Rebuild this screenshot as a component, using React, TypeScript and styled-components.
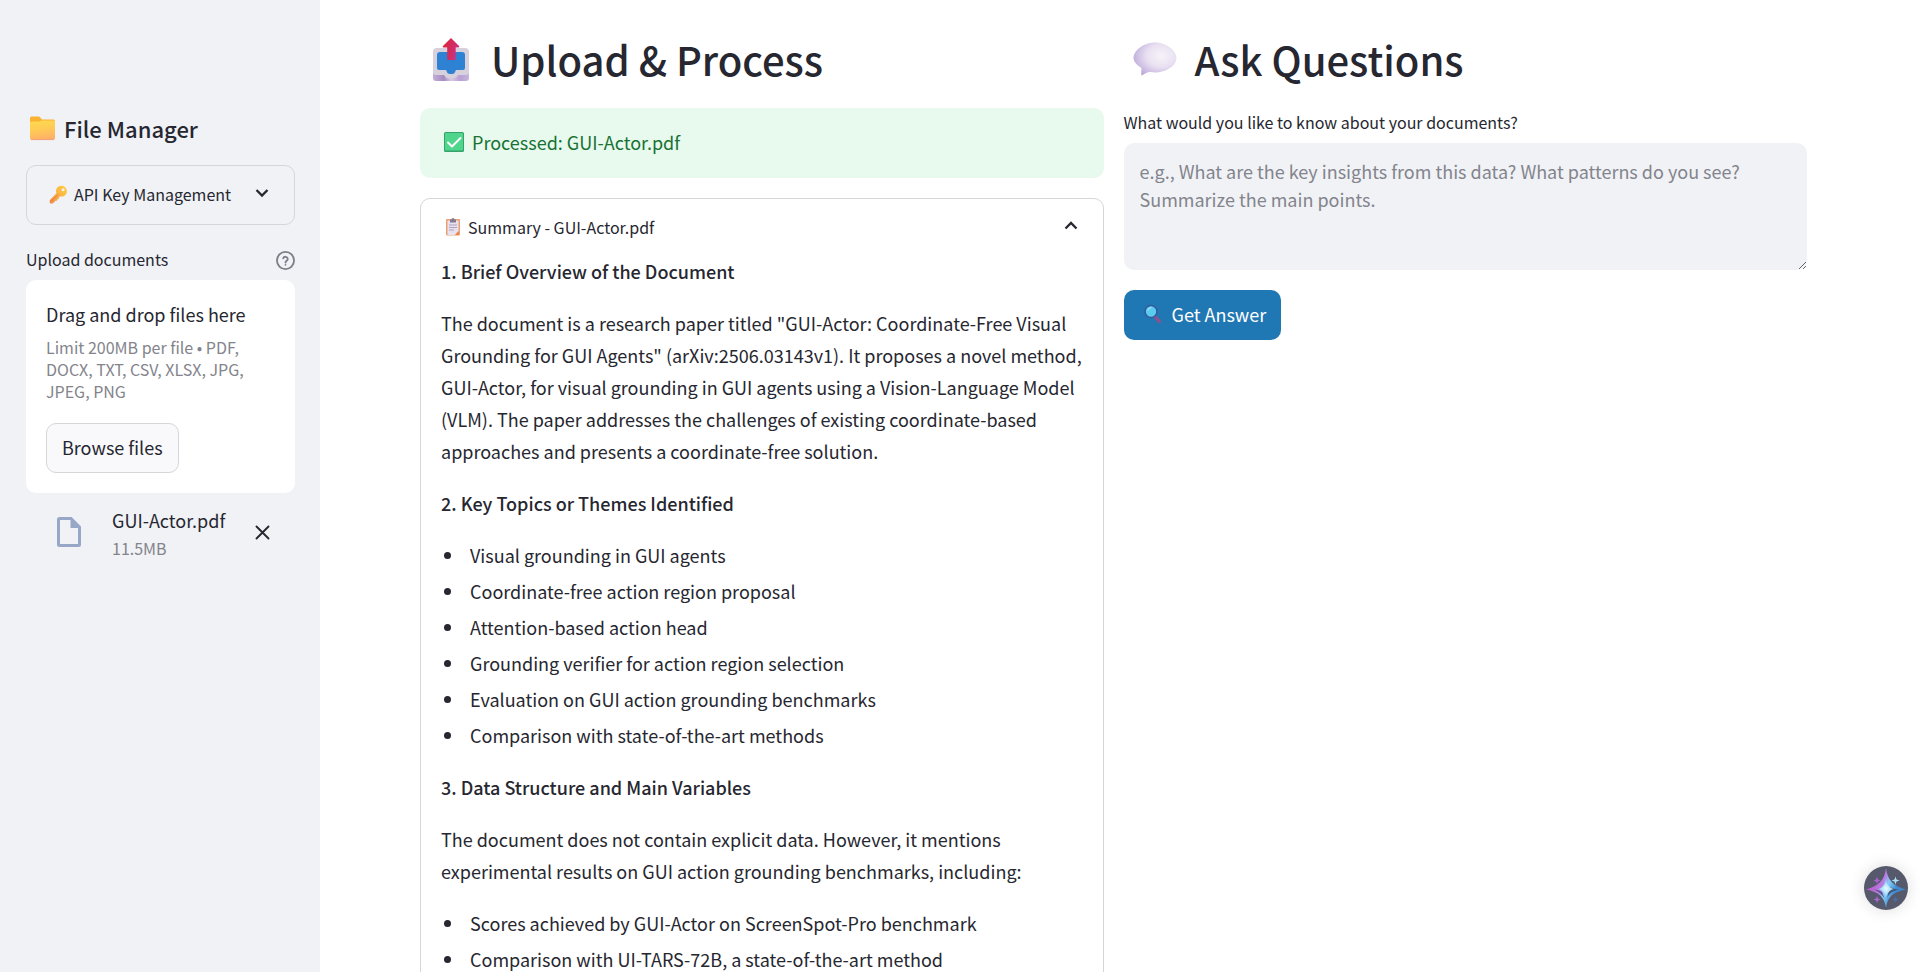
import React, { useState } from "react";
import styled, { createGlobalStyle } from "styled-components";

const heading = "#262730";
const muted = "#83848c";
const line = "#d6d6d9";
const panel = "#f0f2f6";

const GlobalStyle = createGlobalStyle`
  *, *::before, *::after { box-sizing: border-box; }
  body {
    margin: 0;
    background: #fff;
    color: ${heading};
    font-family: "Noto Sans CJK JP", "Noto Sans", sans-serif;
    font-size: 18px;
    line-height: 32px;
  }
  button, textarea, input { font: inherit; color: inherit; }
  h1, h2, h3, p, ul { margin: 0; padding: 0; }
  svg { display: block; flex: none; }
`;

const Shell = styled.div`
  display: flex;
  height: 100vh;
  overflow: hidden;
`;

const Sidebar = styled.aside`
  flex: 0 0 320px;
  padding: 113px 25px 0 26px;
  background: ${panel};
`;

const SidebarTitle = styled.h2`
  display: flex;
  align-items: center;
  gap: 8px;
  padding-left: 3px;
  margin-bottom: 22px;
  font-size: 22px;
  font-weight: 500;
  line-height: 30px;
`;

const Expander = styled.details`
  border: 1px solid ${line};
  border-radius: 10px;
  margin-bottom: 20px;
`;

const ExpanderHead = styled.summary<{ $compact?: boolean }>`
  display: flex;
  align-items: center;
  gap: ${(p) => (p.$compact ? 6 : 7)}px;
  height: ${(p) => (p.$compact ? 58 : 56)}px;
  padding: 0 25px ${(p) => (p.$compact ? 2 : 0)}px ${(p) => (p.$compact ? 22 : 24)}px;
  font-size: 16px;
  cursor: pointer;
  list-style: none;
  white-space: nowrap;
  &::-webkit-details-marker { display: none; }
  & > svg:last-child { margin-left: auto; }
`;

const FieldLabelRow = styled.div`
  display: flex;
  align-items: center;
  justify-content: space-between;
`;

const FieldLabel = styled.label`
  display: block;
  margin-bottom: 7px;
  font-size: 16px;
  line-height: 28px;
`;

const HelpButton = styled.button`
  padding: 0 0 4px;
  border: 0;
  background: none;
  cursor: pointer;
`;

const DropZone = styled.section`
  padding: 20px;
  border-radius: 10px;
  background: #fff;
`;

const DropTitle = styled.p`
  line-height: 28px;
`;

const DropHint = styled.p`
  margin: 8px 0 21px;
  color: ${muted};
  font-size: 16px;
  line-height: 22px;
`;

const BrowseButton = styled.button`
  height: 50px;
  padding: 0 15px 2px;
  border: 1px solid ${line};
  border-radius: 10px;
  background: #f9f9fb;
  cursor: pointer;
`;

const FileRow = styled.div`
  display: flex;
  align-items: center;
  padding: 13px 25px 0 30px;
  & > svg, & > button { margin-bottom: 4px; }
`;

const FileInfo = styled.div`
  flex: 1;
  margin-left: 30px;
  line-height: 28px;
`;

const FileSize = styled.div`
  color: ${muted};
  font-size: 16px;
`;

const RemoveButton = styled.button`
  padding: 0;
  border: 0;
  background: none;
  cursor: pointer;
`;

const Main = styled.main`
  flex: 1;
  display: grid;
  grid-template-columns: 1fr 1fr;
  align-items: start;
  gap: 20px;
  padding: 32px 113px 0 100px;
`;

const Column = styled.section`
  min-width: 0;
`;

const Title = styled.h1`
  display: flex;
  align-items: center;
  gap: 18px;
  margin-bottom: 22px;
  padding-left: 9px;
  font-size: 40px;
  font-weight: 500;
  line-height: 54px;
  white-space: nowrap;
`;

const Notice = styled.div`
  display: flex;
  align-items: center;
  gap: 8px;
  height: 70px;
  margin-bottom: 20px;
  padding: 0 24px 2px;
  border-radius: 10px;
  background: #e8f9ee;
  color: #177233;
`;

const Report = styled.div`
  padding: 0 20px 20px;
  & > * + * { margin-top: 20px; }
`;

const ReportHeading = styled.h3`
  font-size: 18px;
  font-weight: 500;
`;

const Bullets = styled.ul`
  display: grid;
  gap: 4px;
  list-style: none;
`;

const Bullet = styled.li`
  display: flex;
  align-items: center;
  gap: 19px;
  padding-left: 3px;
  &::before {
    content: "";
    width: 7px;
    height: 7px;
    border-radius: 50%;
    background: ${heading};
  }
`;

const QuestionBox = styled.textarea`
  display: block;
  width: 100%;
  height: 127px;
  margin-bottom: 20px;
  padding: 14px 16px;
  border: 0;
  border-radius: 10px;
  background: ${panel};
  line-height: 28px;
  resize: vertical;
  outline: none;
  &::placeholder { color: ${muted}; opacity: 1; }
`;

const PrimaryButton = styled.button`
  display: flex;
  align-items: center;
  gap: 8px;
  height: 50px;
  padding: 0 15px 2px 20px;
  border: 0;
  border-radius: 10px;
  background: #1f77b4;
  color: #fff;
  cursor: pointer;
`;

const Assistant = styled.button`
  position: fixed;
  right: 12px;
  bottom: 62px;
  width: 44px;
  height: 44px;
  padding: 0;
  border: 0;
  border-radius: 50%;
  background: none;
  box-shadow: 0 0 16px rgba(0, 0, 0, 0.14);
  cursor: pointer;
`;

const FolderIcon = () => (
  <svg width="27" height="26" viewBox="0 0 27 26" aria-hidden="true">
    <defs>
      <linearGradient id="folder" x1="0" y1="0" x2="0.2" y2="1">
        <stop offset="0" stopColor="#ffd94f" />
        <stop offset="0.5" stopColor="#ffcc55" />
        <stop offset="1" stopColor="#ffb266" />
      </linearGradient>
    </defs>
    <path d="M1 3a1.500 1.500 0 0 1 1.500-1.500H9c1 0 1.500.3 2.200 1L13 4.500h11.500A1.500 1.500 0 0 1 26 6v6H1z" fill="#f9b232" />
    <path d="M1 8.500C1 7 1.800 6.500 3 6.500h7c1.500 0 2-1 3.500-1h11A1.500 1.500 0 0 1 26 7v16a2 2 0 0 1-2 2H3a2 2 0 0 1-2-2z" fill="url(#folder)" />
    <path d="M2 24.600h23" stroke="#ee9a83" strokeWidth="0.8" />
  </svg>
);

const KeyIcon = () => (
  <svg width="19" height="19" viewBox="0 0 19 19" aria-hidden="true">
    <defs>
      <linearGradient id="key" x1="1" y1="0" x2="0" y2="1">
        <stop offset="0" stopColor="#ffcf3d" />
        <stop offset="0.5" stopColor="#fbb347" />
        <stop offset="1" stopColor="#f08b4b" />
      </linearGradient>
    </defs>
    <path
      fillRule="evenodd"
      fill="url(#key)"
      d="M12.600.8a5.400 5.400 0 1 1-1.500 10.600L9.800 12.700v1.500H8.200v1.600H6.500L4.400 18a1.500 1.500 0 0 1-1 .4H1.500a.8.8 0 0 1-.8-.8v-1.900c0-.4.1-.7.4-1l6.300-6.400A5.400 5.400 0 0 1 12.600.8zm1.500 2.500a1.500 1.500 0 1 0 0 3 1.500 1.500 0 0 0 0-3z"
    />
    <path d="M2 16.500 9.300 9.200" stroke="#d9713f" strokeWidth="0.8" />
  </svg>
);

const Chevron = ({ up = false }: { up?: boolean }) => (
  <svg width="14" height="20" viewBox="0 0 14 20" aria-hidden="true">
    <path d={up ? "M1.500 11.500 7 6l5.500 5.500" : "M1.500 6 7 11.500 12.500 6"} fill="none" stroke={heading} strokeWidth="2.300" />
  </svg>
);

const HelpIcon = () => (
  <svg width="19" height="19" viewBox="0 0 24 24" fill="none" stroke="#7d7e87" strokeWidth="2.300" strokeLinecap="round" strokeLinejoin="round" aria-hidden="true">
    <circle cx="12" cy="12" r="10.800" />
    <path d="M9.100 9.200a3 3 0 0 1 5.800 1c0 2-2.900 2.400-2.900 4.300M12 17.500h.01" />
  </svg>
);

const FileIcon = () => (
  <svg width="26" height="32" viewBox="0 0 26 32" aria-hidden="true">
    <path d="M3.500 2.500H15l8.500 8.500v17.500a1 1 0 0 1-1 1h-19a1 1 0 0 1-1-1v-25a1 1 0 0 1 1-1z" fill="none" stroke="#98a6c8" strokeWidth="3" />
    <path d="M14.500 2.500V12h9.500z" fill="#98a6c8" />
  </svg>
);

const CloseIcon = () => (
  <svg width="15" height="15" viewBox="0 0 15 15" aria-hidden="true">
    <path d="M1.500 1.500l12 12M13.500 1.500l-12 12" stroke={heading} strokeWidth="1.900" strokeLinecap="round" />
  </svg>
);

const OutboxIcon = () => (
  <svg width="44" height="46" viewBox="0 0 44 46" aria-hidden="true">
    <defs>
      <linearGradient id="trayFront" x1="0" y1="0" x2="1" y2="0">
        <stop offset="0" stopColor="#c2afd8" />
        <stop offset="0.3" stopColor="#a48cc0" />
        <stop offset="0.5" stopColor="#d7c9e3" />
        <stop offset="0.75" stopColor="#b9a0d6" />
        <stop offset="1" stopColor="#c6b4dc" />
      </linearGradient>
      <linearGradient id="arrow" x1="0" y1="0" x2="1" y2="0.4">
        <stop offset="0" stopColor="#de2430" />
        <stop offset="1" stopColor="#cc3181" />
      </linearGradient>
    </defs>
    <rect x="4" y="28" width="36" height="17" rx="3" fill="url(#trayFront)" />
    <path d="M8 12h28a4 4 0 0 1 4 4v20a3 3 0 0 1-3 3h-8l-2 2.500c-2 1.500-8 1.500-10 0L15 39H7a3 3 0 0 1-3-3V16a4 4 0 0 1 4-4z" fill="#d7d0dd" />
    <path d="M11 16h22a3 3 0 0 1 3 3v13a2 2 0 0 1-2 2h-7l-1.500 3c-1 1.400-6 1.400-7 0L17 34h-7a2 2 0 0 1-2-2V19a3 3 0 0 1 3-3z" fill="#2d82d4" />
    <path d="M22 2l8 8c.6.7.3 1.500-.6 1.500h-2.700V23a1 1 0 0 1-1 1h-6.500a1 1 0 0 1-1-1V11.500h-3.600c-.9 0-1.200-.8-.6-1.500z" fill="url(#arrow)" />
  </svg>
);

const SpeechIcon = () => (
  <svg width="44" height="46" viewBox="0 0 44 46" aria-hidden="true">
    <defs>
      <radialGradient id="speech" cx="0.65" cy="0.4" r="0.7">
        <stop offset="0" stopColor="#f6f3f9" />
        <stop offset="0.5" stopColor="#e9e0f1" />
        <stop offset="1" stopColor="#bcaadb" />
      </radialGradient>
    </defs>
    <path d="M22 6.500c12 0 21.500 8.500 21.500 15.500C43.500 29.500 33 36.500 22 36.500c-2 0-3.500-.2-5-.4-2.500.3-5 1.400-7.600 3.200-.7.400-1.200 0-1.200-.7l.2-6.600C4 29 .5 25.500.5 22 .5 15 10 6.500 22 6.500z" fill="url(#speech)" />
  </svg>
);

const CheckIcon = () => (
  <svg width="20" height="20" viewBox="0 0 20 20" aria-hidden="true">
    <rect width="20" height="20" rx="1.500" fill="#34a36c" />
    <rect x="1" y="1" width="18" height="17.500" rx="1" fill="#4fd58c" />
    <path d="M4 10.500l4 4 8.500-8.500" fill="none" stroke="#fff" strokeWidth="2" strokeLinecap="round" strokeLinejoin="round" />
  </svg>
);

const ClipboardIcon = () => (
  <svg width="16" height="18" viewBox="0 0 16 18" aria-hidden="true">
    <rect x="1" y="1" width="14" height="16.500" rx="1" fill="#e9a16f" />
    <path d="M2.500 2.500h11v11l-3 3.500h-8z" fill="#e8e1f0" />
    <path d="M13.500 13l-3.500 4h3.500z" fill="#f07f3e" />
    <path d="M5 1.500h1.500a1.500 1.500 0 0 1 3 0H11v3H5z" fill="#857a92" />
    <path d="M4 7h8M4 9.500h8M4 12h5" stroke="#b0a3bd" strokeWidth="1" />
  </svg>
);

const MagnifierIcon = () => (
  <svg width="20" height="22" viewBox="0 0 20 22" aria-hidden="true">
    <path d="M11.500 14l4 4.500" stroke="#85558f" strokeWidth="3.500" strokeLinecap="round" />
    <circle cx="7" cy="8.500" r="6" fill="#5acbee" stroke="#365a9c" strokeWidth="1.600" />
    <path d="M4 7a4 4 0 0 1 3-2.500" fill="none" stroke="#8be1f7" strokeWidth="1.500" strokeLinecap="round" />
  </svg>
);

const SparkIcon = () => (
  <svg width="44" height="44" viewBox="0 0 44 44" aria-hidden="true">
    <defs>
      <linearGradient id="spark" x1="0" y1="0.3" x2="1" y2="0.7">
        <stop offset="0" stopColor="#c04bc4" />
        <stop offset="0.38" stopColor="#b77be0" />
        <stop offset="0.52" stopColor="#86cdf8" />
        <stop offset="0.72" stopColor="#3f8bd0" />
        <stop offset="1" stopColor="#3b82c4" />
      </linearGradient>
      <radialGradient id="core">
        <stop offset="0" stopColor="#e8fbff" />
        <stop offset="1" stopColor="#7cc8f5" />
      </radialGradient>
    </defs>
    <circle cx="22" cy="22" r="22" fill="#56596c" />
    <path d="M22 2c1.500 12 7 18 20 21.500C29 26 23.500 31 22 42 20.500 31 15 26 2 23.500 15 20 20.500 14 22 2z" fill="url(#spark)" />
    <path d="M26 21c3 1.500 5.500 2.300 9 2.600-6 1.200-9.500 3.600-12 8.400z" fill="#455579" />
    <path d="M18 26c-2.500-1.600-5-2.200-8-2.500 4 1.800 8 4.500 10.500 9z" fill="#5a5788" />
    <path d="M22 13c1 6 3 8.500 8 10-5 1.500-7 4-8 9-1-5-3-7.500-8-9 5-1.500 7-4 8-10z" fill="url(#core)" />
    <path d="M13 11l1 2.500 2.500 1-2.500 1L13 18l-1-2.500-2.500-1 2.500-1z" fill="#ad62cf" />
    <path d="M31.500 10.500l1 3 3 1-3 1-1 3-1-3-3-1 3-1z" fill="#a9e4f5" />
    <path d="M13 30l1 2.500 2.500 1-2.500 1L13 37l-1-2.500-2.500-1 2.500-1z" fill="#a867cd" />
    <path d="M31.500 30.500l1 2 2 1-2 1-1 2-1-2-2-1 2-1z" fill="#446ea3" />
  </svg>
);

const topics = [
  "Visual grounding in GUI agents",
  "Coordinate-free action region proposal",
  "Attention-based action head",
  "Grounding verifier for action region selection",
  "Evaluation on GUI action grounding benchmarks",
  "Comparison with state-of-the-art methods",
];

const results = [
  "Scores achieved by GUI-Actor on ScreenSpot-Pro benchmark",
  "Comparison with UI-TARS-72B, a state-of-the-art method",
];

const BulletList = ({ items }: { items: string[] }) => (
  <Bullets>
    {items.map((item) => (
      <Bullet key={item}>{item}</Bullet>
    ))}
  </Bullets>
);

export default function App() {
  const [question, setQuestion] = useState("");

  return (
    <>
      <GlobalStyle />
      <Shell>
        <Sidebar>
          <SidebarTitle>
            <FolderIcon />
            File Manager
          </SidebarTitle>
          <Expander>
            <ExpanderHead $compact>
              <KeyIcon />
              API Key Management
              <Chevron />
            </ExpanderHead>
          </Expander>
          <FieldLabelRow>
            <FieldLabel htmlFor="browse">Upload documents</FieldLabel>
            <HelpButton type="button" aria-label="Help">
              <HelpIcon />
            </HelpButton>
          </FieldLabelRow>
          <DropZone>
            <DropTitle>Drag and drop files here</DropTitle>
            <DropHint>Limit 200MB per file • PDF, DOCX, TXT, CSV, XLSX, JPG, JPEG, PNG</DropHint>
            <BrowseButton id="browse" type="button">Browse files</BrowseButton>
          </DropZone>
          <FileRow>
            <FileIcon />
            <FileInfo>
              <div>GUI-Actor.pdf</div>
              <FileSize>11.5MB</FileSize>
            </FileInfo>
            <RemoveButton type="button" aria-label="Remove file">
              <CloseIcon />
            </RemoveButton>
          </FileRow>
        </Sidebar>
        <Main>
          <Column>
            <Title>
              <OutboxIcon />
              Upload &amp; Process
            </Title>
            <Notice role="status">
              <CheckIcon />
              Processed: GUI-Actor.pdf
            </Notice>
            <Expander open>
              <ExpanderHead>
                <ClipboardIcon />
                Summary - GUI-Actor.pdf
                <Chevron up />
              </ExpanderHead>
              <Report>
                <ReportHeading>1. Brief Overview of the Document</ReportHeading>
                <p>
                  The document is a research paper titled "GUI-Actor: Coordinate-Free Visual Grounding for GUI Agents"
                  (arXiv:2506.03143v1). It proposes a novel method, GUI-Actor, for visual grounding in GUI agents using
                  a Vision-Language Model (VLM). The paper addresses the challenges of existing coordinate-based
                  approaches and presents a coordinate-free solution.
                </p>
                <ReportHeading>2. Key Topics or Themes Identified</ReportHeading>
                <BulletList items={topics} />
                <ReportHeading>3. Data Structure and Main Variables</ReportHeading>
                <p>
                  The document does not contain explicit data. However, it mentions experimental results on GUI action
                  grounding benchmarks, including:
                </p>
                <BulletList items={results} />
              </Report>
            </Expander>
          </Column>
          <Column>
            <Title>
              <SpeechIcon />
              Ask Questions
            </Title>
            <FieldLabel htmlFor="question">What would you like to know about your documents?</FieldLabel>
            <QuestionBox
              id="question"
              value={question}
              onChange={(e) => setQuestion(e.target.value)}
              placeholder="e.g., What are the key insights from this data? What patterns do you see? Summarize the main points."
            />
            <PrimaryButton type="button">
              <MagnifierIcon />
              Get Answer
            </PrimaryButton>
          </Column>
        </Main>
      </Shell>
      <Assistant type="button" aria-label="Open assistant">
        <SparkIcon />
      </Assistant>
    </>
  );
}
